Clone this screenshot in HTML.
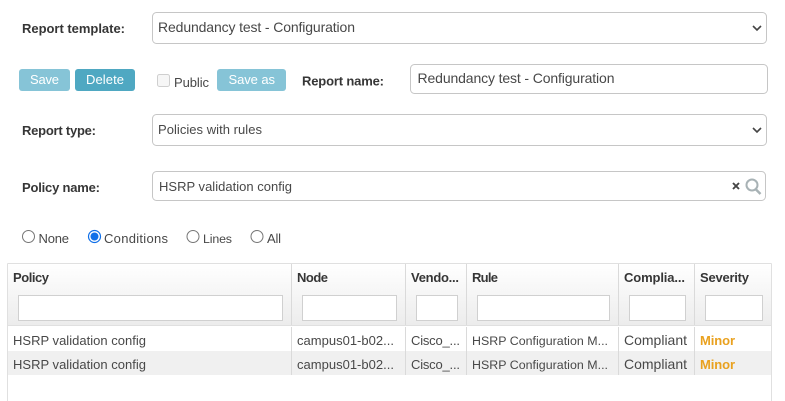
<!DOCTYPE html>
<html lang="en">
<head>
<meta charset="utf-8">
<title>Report</title>
<style>
html,body{margin:0;padding:0;background:#fff;width:785px;height:401px;overflow:hidden}
svg{display:block}
text{font-family:"Liberation Sans",sans-serif;font-size:13px;fill:#484848}
.b{font-weight:bold;fill:#363636}
.w{fill:#fff;font-size:13px}
.f{fill:#fff;stroke:#d0d0d0;stroke-width:1}
.i{fill:#fff;stroke:#c6c6c6;stroke-width:1}
.s{stroke:#e0e0e0;stroke-width:1}
.m{font-weight:bold;fill:#e9a11f}
.c{fill:none;stroke:#444;stroke-width:1.6}
.r{fill:#fff;stroke:#767676;stroke-width:1}
.l{font-size:14px}
.n{font-size:12.4px}
</style>
</head>
<body>
<svg width="785" height="401" viewBox="0 0 785 401" xmlns="http://www.w3.org/2000/svg">
<defs>
<linearGradient id="g" x1="0" y1="0" x2="0" y2="1"><stop offset="0" stop-color="#fff"/><stop offset="1" stop-color="#ececec"/></linearGradient>
</defs>

<text class="b" x="22" y="33" textLength="103" lengthAdjust="spacing">Report template:</text>
<rect class="i" x="152.5" y="12.5" width="614" height="31" rx="4"/>
<text class="l" x="158" y="32" textLength="197" lengthAdjust="spacing">Redundancy test - Configuration</text>
<path class="c" d="M753 26l4 4 4-4"/>

<rect x="19" y="69" width="51" height="22" rx="3" fill="#86c4d7"/>
<text class="w" x="30" y="84" textLength="29" lengthAdjust="spacing">Save</text>
<rect x="75" y="69" width="60" height="22" rx="3" fill="#4fa8c2"/>
<text class="w" x="86" y="84" textLength="38" lengthAdjust="spacing">Delete</text>
<rect x="157.5" y="74.500" width="12" height="12" rx="2" fill="#f6f6f6" stroke="#cfcfcf"/>
<text x="174" y="87" textLength="35" lengthAdjust="spacing">Public</text>
<rect x="217" y="69" width="69" height="22" rx="3" fill="#86c4d7"/>
<text class="w" x="228.500" y="84" textLength="46.500" lengthAdjust="spacing">Save as</text>
<text class="b" x="302" y="85.500" textLength="82" lengthAdjust="spacing">Report name:</text>
<rect class="i" x="410.500" y="64.500" width="357" height="29" rx="4"/>
<text class="l" x="417.500" y="83" textLength="197" lengthAdjust="spacing">Redundancy test - Configuration</text>

<text class="b" x="22" y="135" textLength="74" lengthAdjust="spacing">Report type:</text>
<rect class="i" x="152.500" y="114.500" width="614" height="31" rx="4"/>
<text x="158" y="134" textLength="104" lengthAdjust="spacing">Policies with rules</text>
<path class="c" d="M753 128l4 4 4-4"/>

<text class="b" x="22" y="192" textLength="78" lengthAdjust="spacing">Policy name:</text>
<rect class="i" x="152.500" y="171.500" width="613" height="29" rx="4"/>
<text x="159" y="191" textLength="133" lengthAdjust="spacing">HSRP validation config</text>
<path d="M733 183l6 6M739 183l-6 6" stroke="#444" stroke-width="1.900" fill="none"/>
<circle cx="752" cy="185" r="5.500" fill="none" stroke="#a8b2b5" stroke-width="2"/>
<path d="M756 189.500l4.500 4.500" stroke="#a8b2b5" stroke-width="2.500" fill="none"/>

<circle class="r" cx="28.500" cy="236.500" r="6"/>
<text x="38.500" y="243" textLength="30.500" lengthAdjust="spacing">None</text>
<circle cx="94.500" cy="236.500" r="6" fill="#fff" stroke="#0f6fe8" stroke-width="1.200"/>
<circle cx="94.500" cy="236.500" r="4" fill="#0f6fe8"/>
<text x="104" y="243" textLength="64" lengthAdjust="spacing">Conditions</text>
<circle class="r" cx="193" cy="236.500" r="6"/>
<text class="n" x="203" y="243" textLength="29" lengthAdjust="spacing">Lines</text>
<circle class="r" cx="257" cy="236.500" r="6"/>
<text x="267" y="243" textLength="14" lengthAdjust="spacing">All</text>

<rect x="8" y="264" width="763" height="61" fill="url(#g)"/>
<rect x="8" y="351" width="763" height="24" fill="#f0f0f0"/>
<path class="s" d="M7.500 263.500H771.500M7.500 325.500H771.500M7.500 263.500V401M771.500 263.500V401"/>
<path d="M291.500 264V325M405.500 264V325M466.500 264V325M618.500 264V325M694.500 264V325M291.500 327V375M405.500 327V375M466.500 327V375M618.500 327V375M694.500 327V375" stroke="#dadada" stroke-width="1" fill="none"/>

<text class="b" x="13" y="282" textLength="36" lengthAdjust="spacing">Policy</text>
<text class="b" x="297" y="282" textLength="31" lengthAdjust="spacing">Node</text>
<text class="b" x="411" y="282" textLength="48" lengthAdjust="spacing">Vendo...</text>
<text class="b" x="472" y="282" textLength="26" lengthAdjust="spacing">Rule</text>
<text class="b" x="624" y="282" textLength="61" lengthAdjust="spacing">Complia...</text>
<text class="b" x="700" y="282" textLength="49" lengthAdjust="spacing">Severity</text>

<rect class="f" x="18.500" y="295.500" width="264" height="25"/>
<rect class="f" x="302.500" y="295.500" width="94" height="25"/>
<rect class="f" x="416.500" y="295.500" width="41" height="25"/>
<rect class="f" x="477.500" y="295.500" width="132" height="25"/>
<rect class="f" x="629.500" y="295.500" width="56" height="25"/>
<rect class="f" x="705.500" y="295.500" width="57" height="25"/>

<text x="13" y="345" textLength="133" lengthAdjust="spacing">HSRP validation config</text>
<text x="297" y="345" textLength="97" lengthAdjust="spacing">campus01-b02...</text>
<text x="411" y="345" textLength="49" lengthAdjust="spacing">Cisco_...</text>
<text class="n" x="472" y="345" textLength="136" lengthAdjust="spacing">HSRP Configuration M...</text>
<text class="l" x="624" y="345" textLength="63" lengthAdjust="spacing">Compliant</text>
<text class="m" x="700" y="345" textLength="35" lengthAdjust="spacing">Minor</text>

<text x="13" y="369" textLength="133" lengthAdjust="spacing">HSRP validation config</text>
<text x="297" y="369" textLength="97" lengthAdjust="spacing">campus01-b02...</text>
<text x="411" y="369" textLength="49" lengthAdjust="spacing">Cisco_...</text>
<text class="n" x="472" y="369" textLength="136" lengthAdjust="spacing">HSRP Configuration M...</text>
<text class="l" x="624" y="369" textLength="63" lengthAdjust="spacing">Compliant</text>
<text class="m" x="700" y="369" textLength="35" lengthAdjust="spacing">Minor</text>
</svg>
</body>
</html>
